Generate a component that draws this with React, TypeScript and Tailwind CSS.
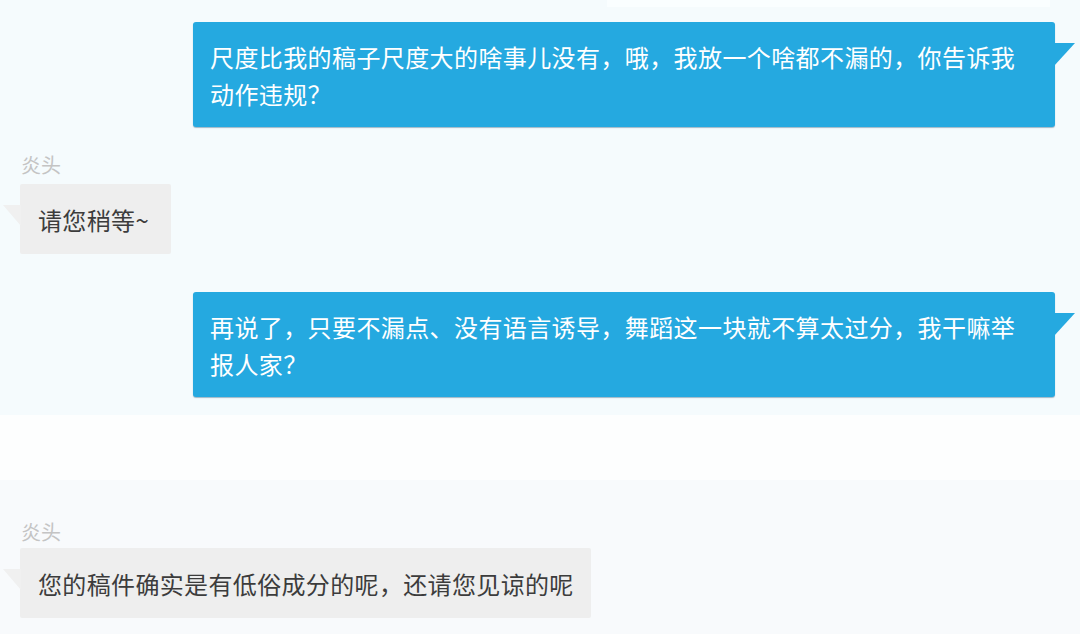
import React from "react";

const font = { fontFamily: '"Noto Sans CJK SC", "Noto Sans", sans-serif' };

function BlueBubble({ lines }: { lines: string[] }) {
  return (
    <div className="relative ml-[193px] w-[862px] rounded-[3px] bg-[#25a9e0] pl-[17px] pr-[12px] pt-[16px] pb-[15px] text-[24px] leading-[37px] tracking-[0.4px] text-white shadow-[0_1px_1px_rgba(0,60,100,0.35)]">
      {lines.map((l, i) => (
        <div key={i} className="whitespace-nowrap">{l}</div>
      ))}
      <svg className="absolute right-[-21px] top-[21px]" width="22" height="24" viewBox="0 0 22 24">
        <polygon points="0,0 21,0 0,23" fill="#25a9e0" />
      </svg>
    </div>
  );
}

function Name() {
  return <div className="ml-[21px] h-[24px] text-[20px] leading-[24px] text-[#c4c4c4]">炎头</div>;
}

function GrayBubble({ text, wide }: { text: string; wide?: boolean }) {
  return (
    <div
      className={
        wide
          ? "relative ml-[20px] w-fit rounded-[2px] bg-[#eeeeee] pl-[18px] pr-[17px] pt-[17px] pb-[16px] text-[24px] leading-[37px] tracking-[0.35px] text-[#3c3c3c]"
          : "relative ml-[20px] w-fit rounded-[2px] bg-[#eeeeee] pl-[18px] pr-[22px] pt-[17px] pb-[16px] text-[24px] leading-[37px] tracking-[0.35px] text-[#3c3c3c]"
      }
    >
      <div className="whitespace-nowrap">{text}</div>
      <svg className="absolute left-[-17px] top-[21px]" width="18" height="22" viewBox="0 0 18 22">
        <polygon points="0,0 18,0 18,21" fill="#f0f0f0" />
      </svg>
    </div>
  );
}

export default function App() {
  return (
    <div className="h-[634px] w-[1080px] overflow-hidden bg-[#f8fafc]" style={font}>
      <div className="flex flex-col bg-[#f5fbfd] pb-[18px]">
        <div className="ml-[607px] h-[7px] w-[443px] bg-[#fafeff]" />
        <div className="mt-[15px]">
          <BlueBubble lines={["尺度比我的稿子尺度大的啥事儿没有，哦，我放一个啥都不漏的，你告诉我", "动作违规？"]} />
        </div>
        <div className="mt-[26px]">
          <Name />
        </div>
        <div className="mt-[7px]">
          <GrayBubble text="请您稍等~" />
        </div>
        <div className="mt-[38px]">
          <BlueBubble lines={["再说了，只要不漏点、没有语言诱导，舞蹈这一块就不算太过分，我干嘛举", "报人家？"]} />
        </div>
      </div>
      <div className="h-[65px] bg-[#fdfefe]" />
      <div className="flex flex-col bg-[#f8fafc]">
        <div className="mt-[40px]">
          <Name />
        </div>
        <div className="mt-[4px]">
          <GrayBubble text="您的稿件确实是有低俗成分的呢，还请您见谅的呢" wide />
        </div>
      </div>
    </div>
  );
}
